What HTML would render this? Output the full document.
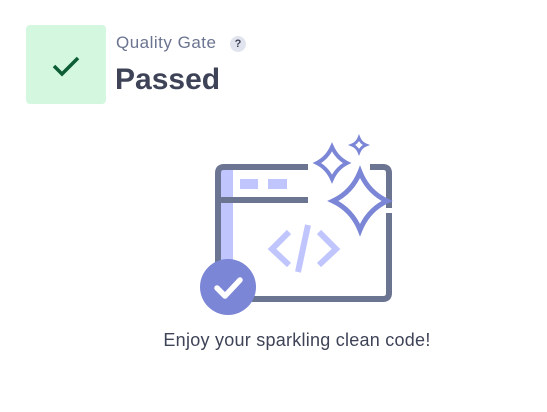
<!DOCTYPE html>
<html><head><style>
body{margin:0;width:547px;height:412px;background:#fff;font-family:"Liberation Sans",sans-serif;position:relative;overflow:hidden}
.box{position:absolute;left:26px;top:25px;width:80px;height:79px;background:#d3f8df;border-radius:4px}
.qg{position:absolute;left:116px;top:33px;font-size:17px;letter-spacing:0.5px;color:#6b7490}
.q{position:absolute;left:230px;top:36px;width:16px;height:16px;border-radius:50%;background:#e1e4ef;color:#3e4357;font-size:11px;font-weight:bold;text-align:center;line-height:16px}
.p{position:absolute;left:115px;top:63px;font-size:30px;font-weight:bold;color:#3e4357}
.t{position:absolute;left:0;width:594px;text-align:center;top:330px;font-size:18px;letter-spacing:0.25px;color:#3e4357}
</style></head><body>
<div class="box"><svg width="80" height="79"><path d="M28 41 L36 49 L52 33" stroke="#0d5e35" stroke-width="3.5" fill="none"/></svg></div>
<div class="qg">Quality Gate</div>
<div class="q">?</div>
<div class="p">Passed</div>
<svg style="position:absolute;left:0;top:0" width="547" height="412">
<rect x="221" y="167" width="12" height="132" fill="#c0c5fd"/>
<path d="M308 167 H224 Q218 167 218 173 V293 Q218 299 224 299 H383 Q389 299 389 293 V213 M389 208 V173 Q389 167 383 167 H370" stroke="#6b7490" stroke-width="6" fill="none"/>
<line x1="218" y1="200" x2="308" y2="200" stroke="#6b7490" stroke-width="6"/>
<rect x="240" y="179" width="18" height="10" fill="#c0c5fd"/>
<rect x="268" y="179" width="19" height="10" fill="#c0c5fd"/>
<path d="M289 232 L272 249 L289 265 M319 232 L336 249 L319 265" stroke="#c0c5fd" stroke-width="6" fill="none"/>
<line x1="308" y1="225" x2="298" y2="272" stroke="#c0c5fd" stroke-width="6"/>
<path d="M360 172 Q368 192 387 201 Q368 210 360 230 Q352 210 333 201 Q352 192 360 172Z" stroke="#7b86d6" stroke-width="5" fill="#fff"/>
<path d="M332 147 Q337 158 347 163 Q337 168 332 179 Q327 168 317 163 Q327 158 332 147Z" stroke="#7b86d6" stroke-width="4" fill="#fff"/>
<path d="M359 138 Q361 143 366 145 Q361 147 359 152 Q357 147 352 145 Q357 143 359 138Z" stroke="#7b86d6" stroke-width="3" fill="#fff"/>
<circle cx="228" cy="287" r="28" fill="#7b86d6"/>
<path d="M217 288 L225 296 L240 280" stroke="#fff" stroke-width="5.5" fill="none" stroke-linecap="round" stroke-linejoin="round"/>
</svg>
<div class="t">Enjoy your sparkling clean code!</div>
</body></html>
